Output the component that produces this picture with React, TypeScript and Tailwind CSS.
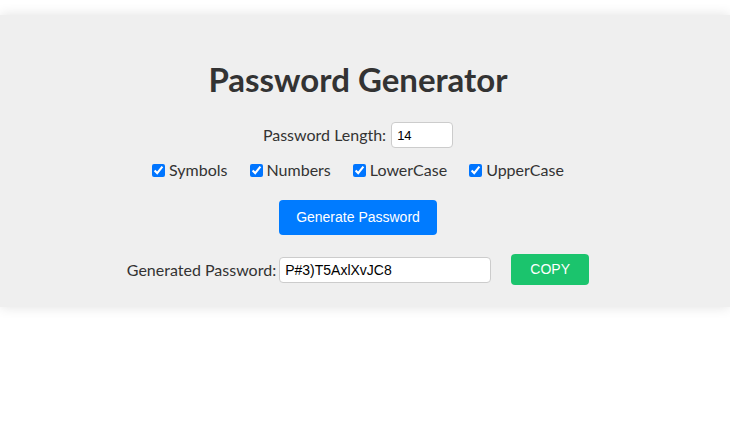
import { useState } from "react";

const OPTIONS = ["Symbols", "Numbers", "LowerCase", "UpperCase"];

export default function App() {
  const [length, setLength] = useState("14");
  const [checked, setChecked] = useState<Record<string, boolean>>({
    Symbols: true,
    Numbers: true,
    LowerCase: true,
    UpperCase: true,
  });

  return (
    <div className="min-h-[443px] bg-white pt-[15px] font-['Lato',sans-serif] text-[#333]">
      <div className="bg-[#efefef] h-[292px] shadow-[0_0_12px_rgba(0,0,0,0.12)] flex flex-col items-center pt-[48px] pr-[14px]">
        <h1 className="text-[33px] font-bold leading-none">Password Generator</h1>

        <div className="flex items-center gap-[5px] mt-[26px] text-[16px]">
          <label>Password Length:</label>
          <input
            type="number"
            value={length}
            onChange={(e) => setLength(e.target.value)}
            className="w-[62px] h-[26px] bg-white border border-[#ccc] rounded-[4px] px-[5px] text-[13px] text-black font-['Liberation_Sans',sans-serif] outline-none [appearance:textfield]"
          />
        </div>

        <div className="flex items-center gap-[22px] mt-[10px] text-[16px]">
          {OPTIONS.map((opt) => (
            <label key={opt} className="flex items-center gap-[4px]">
              <input
                type="checkbox"
                checked={checked[opt]}
                onChange={() => setChecked({ ...checked, [opt]: !checked[opt] })}
                className="w-[13px] h-[13px] accent-[#0075ff]"
              />
              {opt}
            </label>
          ))}
        </div>

        <button className="mt-[18px] w-[158px] h-[35px] bg-[#007bff] text-white rounded-[4px] text-[14px] font-['Liberation_Sans',sans-serif]">
          Generate Password
        </button>

        <div className="flex items-center mt-[19px] text-[16px]">
          <label className="mr-[3px]">Generated Password:</label>
          <input
            readOnly
            value="P#3)T5AxlXvJC8"
            className="w-[212px] h-[26px] bg-white border border-[#ccc] rounded-[4px] px-[5px] text-[14px] text-black font-['Liberation_Sans',sans-serif] outline-none"
          />
          <button className="ml-[20px] w-[78px] h-[31px] bg-[#1bc46d] text-white rounded-[4px] text-[14px] font-['Liberation_Sans',sans-serif]">
            COPY
          </button>
        </div>
      </div>
    </div>
  );
}
